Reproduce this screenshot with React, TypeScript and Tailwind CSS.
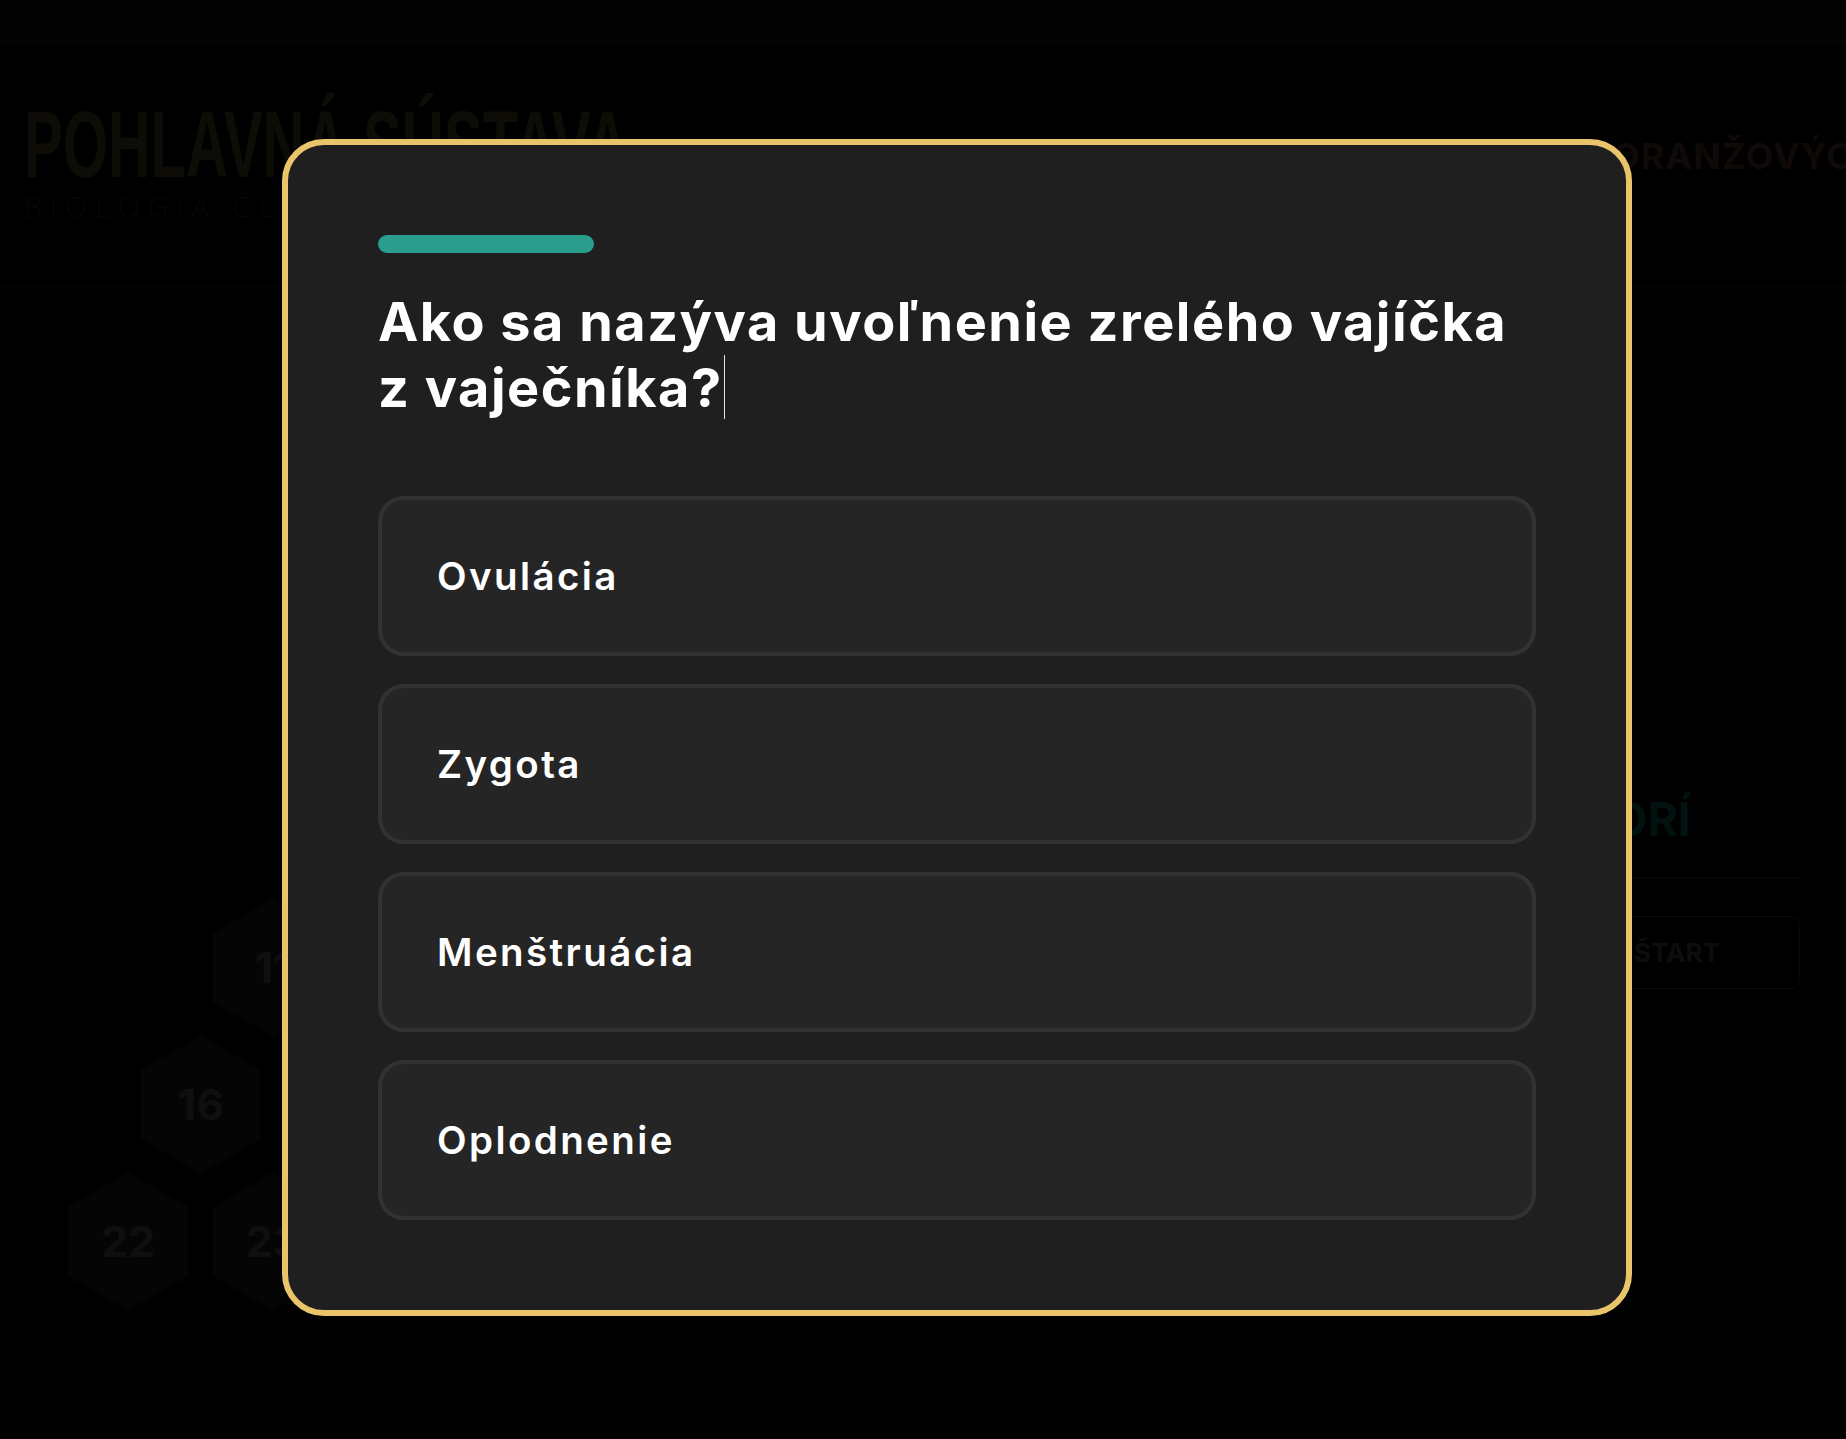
import React from "react";

const hexes = [
  { n: "11", left: 212, top: 610 },
  { n: "16", left: 140, top: 747 },
  { n: "22", left: 67, top: 884 },
  { n: "23", left: 212, top: 884 },
];

function Hex({ n, left, top }: { n: string; left: number; top: number }) {
  return (
    <div className="absolute w-[122px] h-[141px]" style={{ left, top }}>
      <svg width="122" height="141" viewBox="0 0 122 141" className="absolute inset-0">
        <polygon
          points="61,1 121,35.5 121,105.5 61,140 1,105.5 1,35.5"
          fill="#050505"
          stroke="#020202"
          strokeWidth="2"
        />
      </svg>
      <div className="absolute inset-0 flex items-center justify-center font-['Inter',sans-serif] font-bold text-[43px] leading-none text-[#0f0f0f]">
        {n}
      </div>
    </div>
  );
}

const options = ["Ovulácia", "Zygota", "Menštruácia", "Oplodnenie"];

export default function App() {
  return (
    <div className="relative w-full h-[1439px] overflow-hidden bg-black">
      {/* background page (dimmed) */}
      <div className="h-[44px] bg-[#030303] border-b border-[#060606]" />
      <header className="h-[243px] border-b border-[#070707] grid grid-cols-[1612px_1fr]">
        <div className="pt-[57px] pl-[24px]">
          <div className="h-[91px] w-[640px] overflow-visible">
            <div className="origin-left scale-x-[0.62] whitespace-nowrap font-['Liberation_Sans',sans-serif] font-bold text-[94px] leading-[88px] text-[#0d0c07]">
              POHLAVNÁ SÚSTAVA
            </div>
          </div>
          <div className="whitespace-nowrap font-['Open_Sans',sans-serif] font-light text-[28px] leading-none tracking-[0.3em] text-[#070707]">
            BIOLÓGIA ČLOVEKA
          </div>
        </div>
        <div className="pt-[94px] overflow-hidden whitespace-nowrap font-['Inter',sans-serif] font-bold text-[36px] leading-none tracking-[1px] text-[#0f0a08]">
          ORANŽOVÝC
        </div>
      </header>
      <main className="relative h-[1151px] flex justify-end pr-[46px]">
        {hexes.map((h) => (
          <Hex key={h.n} {...h} />
        ))}
        <div className="w-[246px] pt-[509px] flex flex-col font-['Inter',sans-serif]">
          <div className="pl-[58px] font-bold text-[46px] leading-none text-[#021211]">ORÍ</div>
          <div className="mt-[35px] h-px bg-[#0a0a0a]" />
          <div className="mt-[38px] h-[73px] rounded-[10px] border border-[#0b0b0b] flex items-center justify-center font-bold text-[26px] leading-none text-[#0d0d0d]">
            ŠTART
          </div>
        </div>
      </main>

      {/* modal */}
      <div className="absolute left-[282px] top-[139px] w-[1350px] rounded-[42px] border-[6px] border-[#E9C46A] bg-[#1f1f1f] p-[90px] font-['Inter',sans-serif]">
        <div className="h-[18px] w-[216px] rounded-full bg-[#2A9D8F]" />
        <h2 className="mt-[36px] text-[54px] leading-[66px] font-bold tracking-[1.5px] text-white">
          Ako sa nazýva uvoľnenie zrelého vajíčka z vaječníka?
          <span className="inline-block w-px h-[64px] bg-[#e5e5e5] align-top ml-[1px]" />
        </h2>
        <div className="mt-[75px] flex flex-col gap-[28px]">
          {options.map((o) => (
            <div
              key={o}
              className="h-[160px] rounded-[26px] border-4 border-[#323232] bg-[#252525] flex items-center pl-[55px] text-[38.5px] leading-none font-semibold tracking-[2.4px] text-white"
            >
              {o}
            </div>
          ))}
        </div>
      </div>
    </div>
  );
}
